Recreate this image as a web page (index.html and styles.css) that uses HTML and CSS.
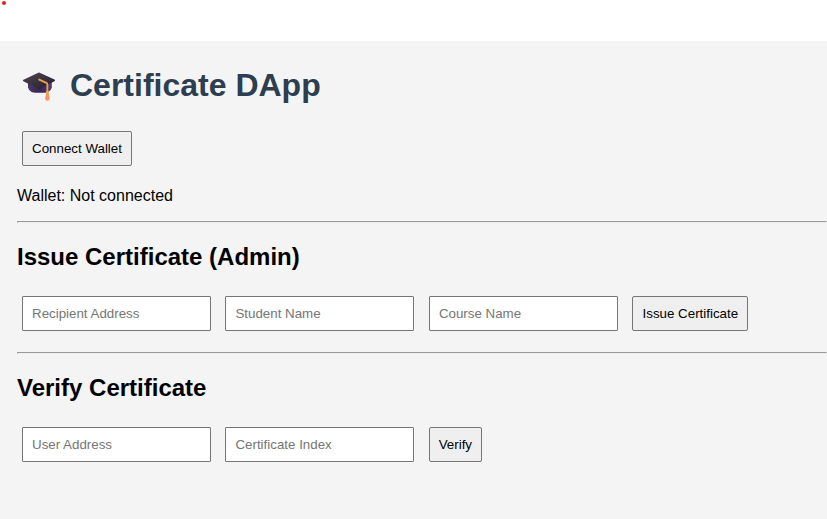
FILE: index.html
```
<!DOCTYPE html>
<html lang="en">
<head>
<meta charset="utf-8">
<title>Certificate DApp</title>
<link rel="stylesheet" href="styles.css">
</head>
<body>
<header class="topbar"><span class="dot"></span></header>
<main class="page">
  <h1 class="title">
    <svg class="cap" viewBox="0 0 34 32" aria-hidden="true">
      <defs>
        <linearGradient id="board" x1="0" y1="0" x2="1" y2="1"><stop offset="0" stop-color="#50454f"/><stop offset="1" stop-color="#251e30"/></linearGradient>
        <linearGradient id="base" x1="0" y1="0" x2="1" y2="0"><stop offset="0" stop-color="#4a3b68"/><stop offset=".5" stop-color="#3a2452"/><stop offset="1" stop-color="#553a78"/></linearGradient>
      </defs>
      <path fill="url(#base)" d="M6 10V16.500Q6.500 19 9.500 21Q11 21.800 13 21.800H23Q25 21.800 26.500 20.800Q29.500 18.800 29.800 16.500V10Z"/>
      <path fill="url(#board)" d="M16.300 1.700Q17 1.400 17.700 1.700L32.500 8.600Q33.700 9.300 32.500 10.200L18.200 17.500Q17 18.100 15.800 17.500L1.300 10.200Q.3 9.400 1.400 8.700Z"/>
      <path fill="none" stroke="#e99d48" stroke-width="1.900" stroke-linecap="round" stroke-linejoin="round" d="M17.200 8.600L24.400 11.800Q25.400 12.400 25.400 13.600V22"/>
      <path fill="#f69763" d="M24.200 21.500H26.600L27.700 27.500Q27.600 29.800 25.400 29.800T23.100 27.500Z"/>
      <path stroke="#e5ae3f" stroke-width="2.600" d="M24 21.500H26.800"/>
    </svg>
    <span>Certificate DApp</span>
  </h1>
  <button class="control button connect">Connect Wallet</button>
  <p class="status">Wallet: Not connected</p>
  <hr class="rule">
  <section class="section">
    <h2 class="heading">Issue Certificate (Admin)</h2>
    <div class="row">
      <input class="control field" placeholder="Recipient Address">
      <input class="control field" placeholder="Student Name">
      <input class="control field" placeholder="Course Name">
      <button class="control button issue">Issue Certificate</button>
    </div>
  </section>
  <hr class="rule">
  <section class="section">
    <h2 class="heading">Verify Certificate</h2>
    <div class="row">
      <input class="control field" placeholder="User Address">
      <input class="control field" placeholder="Certificate Index">
      <button class="control button verify">Verify</button>
    </div>
  </section>
</main>
</body>
</html>
```
FILE: styles.css
```
* { box-sizing: border-box; }
body {
  margin: 0;
  height: 519px;
  display: flex;
  flex-direction: column;
  overflow: hidden;
  background: #fff;
  font: 16px/18px "Liberation Sans", Arial, sans-serif;
  color: #000;
}
.topbar { height: 41px; flex: none; padding: 1px 2px; }
.dot { display: block; width: 4px; height: 4px; border-radius: 50%; background: #e51c23; }
.page { flex: 1; padding: 26px 0 0 17px; background: #f4f4f4; }
.title {
  display: flex;
  margin: 0;
  height: 37px;
  font-size: 32px;
  line-height: 37px;
  color: #2c3e50;
}
.cap { width: 34px; height: 32px; margin: 4px 14px 0 5px; }
.control {
  display: block;
  flex: none;
  height: 35px;
  margin: 0;
  padding: 0 9px;
  border: 1px solid #767676;
  font: 13.333px "Liberation Sans", Arial, sans-serif;
}
.button { padding: 0; border-radius: 2px; background: #efefef; color: #000; text-align: center; white-space: nowrap; }
.field { width: 189px; border-radius: 1px; background: #fff; }
.field::placeholder { color: #757575; opacity: 1; }
.connect { width: 110px; margin: 27px 0 0 5px; }
.issue { width: 116px; }
.verify { width: 53px; }
.status { margin: 21px 0 16px; }
.rule { height: 2px; margin: 0; border: 1px solid; border-color: #9a9a9a #eee #eee #9a9a9a; }
.section { height: 129px; }
.heading { margin: 0; padding-top: 20px; font-size: 24px; line-height: 27px; }
.row { display: flex; gap: 14.45px; margin: 26px 0 0 5px; }
```
